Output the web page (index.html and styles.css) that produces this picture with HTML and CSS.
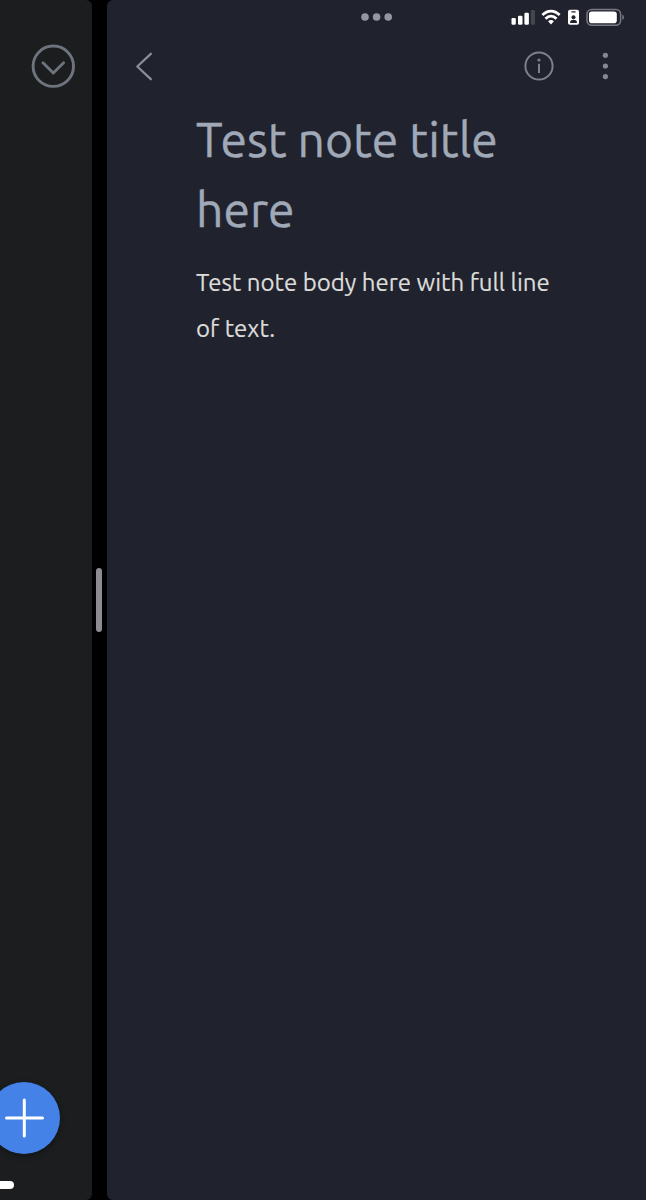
FILE: index.html
```html
<!DOCTYPE html>
<html lang="en">
<head>
<meta charset="utf-8">
<title>Note</title>
<link rel="stylesheet" href="styles.css">
</head>
<body>
<div class="split">
  <aside class="side">
    <svg class="collapse" width="44" height="44" viewBox="0 0 44 44"><circle cx="22.3" cy="22.2" r="20.2"/><path d="M12 18.8 22.3 29 32.6 18.8"/></svg>
    <div class="side-bottom">
      <button class="add" aria-label="Add note"><svg width="72" height="72" viewBox="0 0 72 72"><path d="M36.3 18V54M18.5 36H54.5"/></svg></button>
      <div class="home"></div>
    </div>
  </aside>
  <div class="divider"><div class="handle"></div></div>
  <main class="note">
    <div class="status">
      <div class="multitask"><svg width="32" height="8" viewBox="0 0 32 8"><circle cx="4" cy="4" r="3.8"/><circle cx="15.6" cy="4" r="3.8"/><circle cx="27.2" cy="4" r="3.8"/></svg></div>
      <svg class="indicators" width="120" height="34" viewBox="0 0 120 34">
        <g fill="#fff">
          <rect x="1.5" y="18" width="4.3" height="6.7" rx="1.2"/>
          <rect x="8" y="15.7" width="4.5" height="9" rx="1.2"/>
          <rect x="14.4" y="12.8" width="4.5" height="11.9" rx="1.2"/>
          <rect x="20.8" y="10" width="4.2" height="14.7" rx="1.2" fill="#44454f"/>
        </g>
        <g fill="none" stroke="#fff" stroke-width="2.8">
          <path d="M32.4 15.1C37.6 9.8 44.4 9.8 49.6 15.1"/>
          <path d="M35.5 18.7C38.9 15.3 43.1 15.3 46.5 18.7"/>
        </g>
        <path fill="#fff" d="M38.1 21.3Q41 18.9 43.9 21.3L41 24.4Z"/>
        <rect x="58" y="9.8" width="11" height="15" rx="2" fill="#fff"/>
        <g fill="#20222d"><rect x="61.3" y="11.2" width="4.4" height="1.3" rx=".6"/><circle cx="63.5" cy="17.2" r="2"/><path d="M60 23Q60 19.8 63.5 19.8T67 23Z"/></g>
        <rect x="77" y="9.4" width="33.6" height="15.9" rx="4.8" fill="none" stroke="#777883" stroke-width="1.5"/>
        <rect x="79" y="11.4" width="27.8" height="11.8" rx="2.8" fill="#fff"/>
        <path fill="#777883" d="M112.3 14.5Q114 15.2 114 17.2T112.3 20Z"/>
      </svg>
    </div>
    <header class="toolbar">
      <svg class="back" width="20" height="30" viewBox="0 0 20 30"><path d="M16.8 2.8 3.3 15.5 16.8 28.2"/></svg>
      <div class="actions">
        <svg class="info" width="30" height="30" viewBox="0 0 30 30"><circle cx="15" cy="15" r="13.6"/><path d="M15 12.7V22"/><circle class="dot" cx="15" cy="9" r="1.6"/></svg>
        <svg class="more" width="8" height="30" viewBox="0 0 8 30"><circle cx="4.4" cy="4.3" r="2.6"/><circle cx="4.4" cy="15" r="2.6"/><circle cx="4.4" cy="25.6" r="2.6"/></svg>
      </div>
    </header>
    <article class="content">
      <h1>Test note title<br>here</h1>
      <p>Test note body here with full line<br>of text.</p>
    </article>
  </main>
</div>
</body>
</html>
```
FILE: styles.css
```css
* { box-sizing: border-box; }
body { margin: 0; background: #000; font-family: Ubuntu, "Noto Sans", sans-serif; }
.split { display: flex; width: 646px; height: 1200px; overflow: hidden; }
.side { width: 92px; padding: 44px 0 11px; background: #1b1d1f; border-radius: 0 6px 6px 0; display: flex; flex-direction: column; justify-content: space-between; overflow: hidden; }
.collapse { margin-left: 31px; fill: none; stroke: #6e747e; stroke-width: 2.9; stroke-linecap: round; stroke-linejoin: round; }
.side-bottom { display: flex; flex-direction: column; gap: 27px; }
.add { width: 72px; height: 72px; margin: 0 0 0 -12px; padding: 0; border: 0; border-radius: 50%; background: #4482e8; box-shadow: 0 2px 6px rgba(0, 0, 0, .35); }
.add svg { display: block; fill: none; stroke: #fff; stroke-width: 3; stroke-linecap: round; }
.home { width: 14px; height: 8px; background: #fff; border-radius: 0 4px 4px 0; }
.divider { width: 14.5px; display: flex; align-items: center; justify-content: center; }
.handle { width: 6px; height: 64px; border-radius: 3px; background: #8c8c91; }
.note { flex: 1; min-width: 0; background: #20222d; border-radius: 6px 0 0 6px; }
.status { height: 34px; display: flex; justify-content: space-between; padding-left: 254px; padding-right: 16px; }
.multitask { display: flex; align-items: center; fill: #9496a1; }
.toolbar { height: 64px; padding: 0 37px 0 27.5px; display: flex; align-items: center; justify-content: space-between; }
.back { fill: none; stroke: #8a8d99; stroke-width: 2.3; stroke-linecap: round; stroke-linejoin: round; }
.actions { display: flex; gap: 47px; }
.info { fill: none; stroke: #7e818d; stroke-width: 2; }
.info .dot { fill: #7e818d; stroke: none; }
.more { fill: #858792; }
.content { padding: 6px 0 0 89.5px; white-space: nowrap; }
h1 { margin: 0 0 16px; font-size: 48px; line-height: 70px; font-weight: 400; color: #a0a9b8; -webkit-text-stroke: .4px #a0a9b8; }
p { margin: 0; font-size: 24px; line-height: 46px; color: #dcdcda; -webkit-text-stroke: .2px #dcdcda; }
```
